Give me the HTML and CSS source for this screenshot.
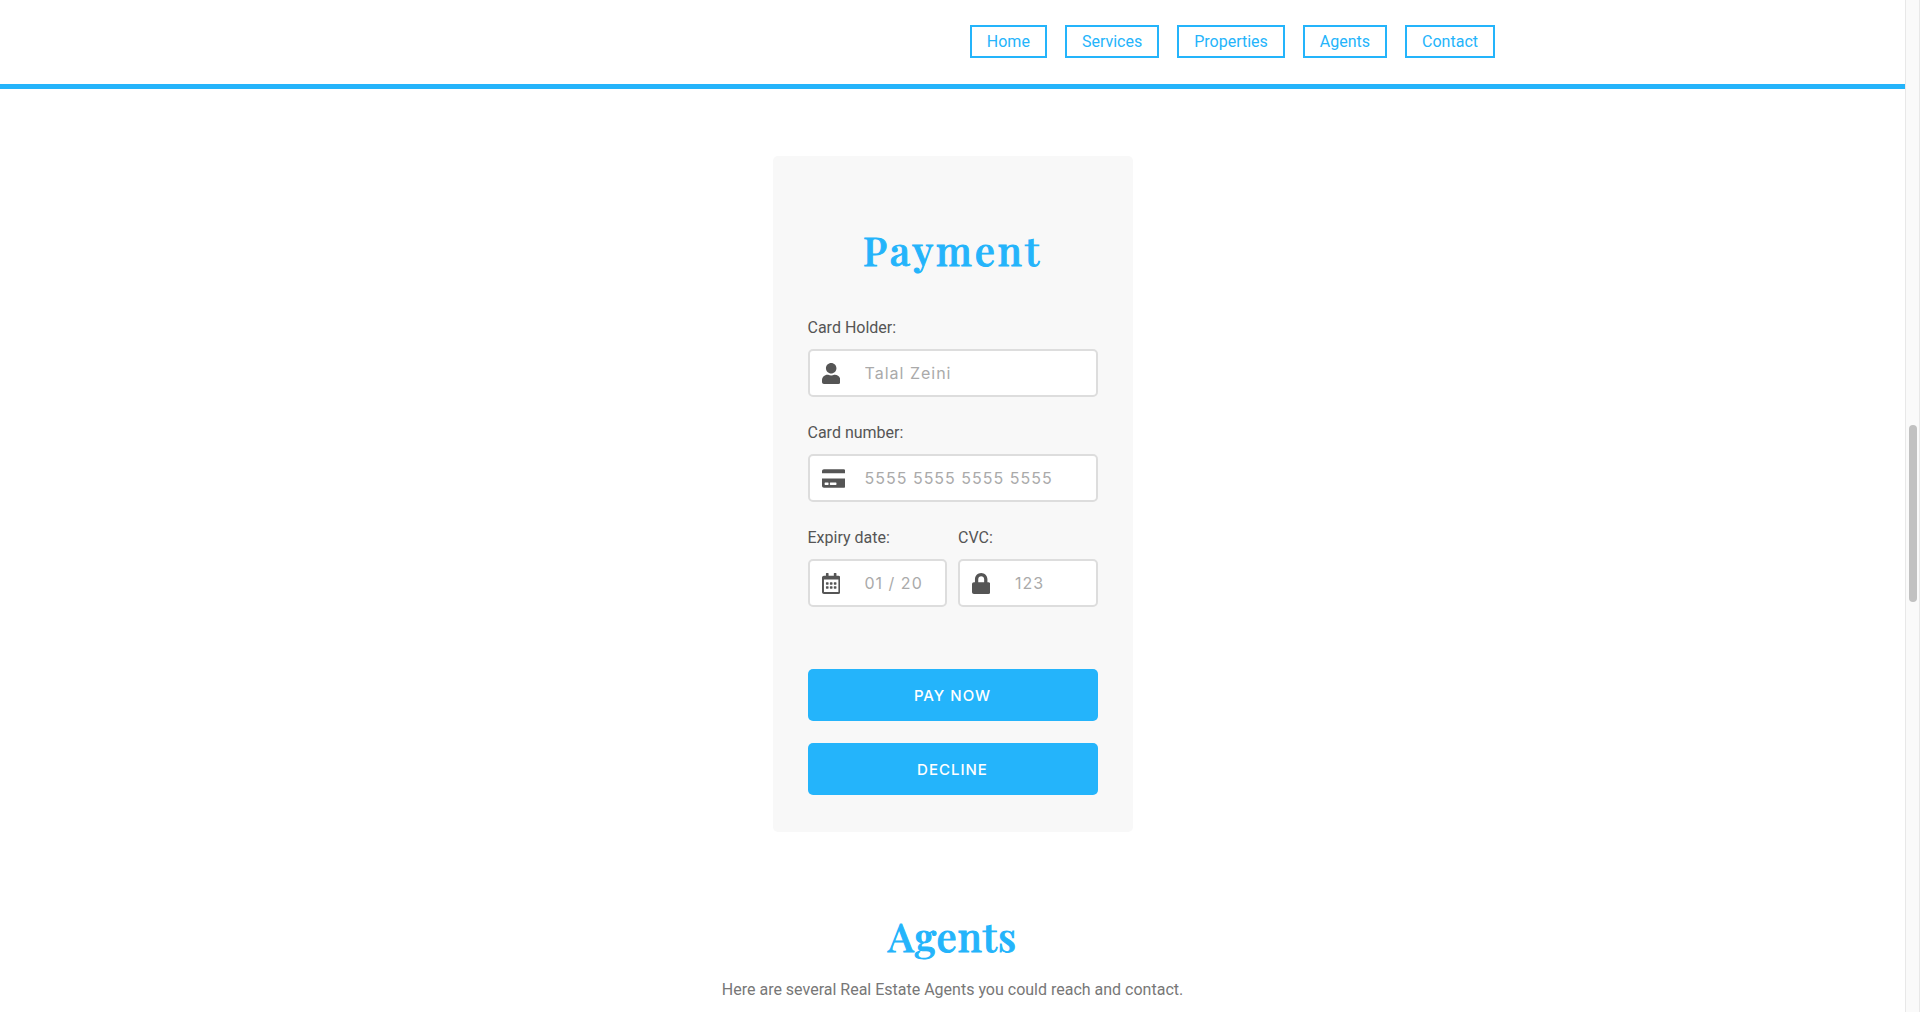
FILE: index.html
```html
<!DOCTYPE html>
<html lang="en">
<head>
<meta charset="utf-8">
<meta name="viewport" content="width=device-width, initial-scale=1">
<title>Real Estate - Payment</title>
<link rel="stylesheet" href="styles.css">
</head>
<body>
<div class="page">
  <header class="header">
    <nav class="nav">
      <a class="nav-link" href="#home">Home</a>
      <a class="nav-link" href="#services">Services</a>
      <a class="nav-link" href="#properties">Properties</a>
      <a class="nav-link" href="#agents">Agents</a>
      <a class="nav-link" href="#contact">Contact</a>
    </nav>
  </header>
  <main class="main">
    <form class="card">
      <h2 class="title title-spaced">Payment</h2>
      <div class="fields">
        <div class="field field-wide">
          <label class="label" for="holder">Card Holder:</label>
          <div class="control">
            <input class="input" id="holder" type="text" placeholder="Talal Zeini">
            <svg class="icon" viewBox="0 0 448 512" aria-hidden="true"><path d="M224 256c70.7 0 128-57.3 128-128S294.7 0 224 0 96 57.3 96 128s57.3 128 128 128zm89.600 32h-16.700c-22.200 10.200-46.900 16-72.900 16s-50.600-5.800-72.900-16h-16.700C60.200 288 0 348.200 0 422.400V464c0 26.500 21.500 48 48 48h352c26.500 0 48-21.500 48-48v-41.600c0-74.200-60.200-134.400-134.400-134.400z"/></svg>
          </div>
        </div>
        <div class="field field-wide">
          <label class="label" for="number">Card number:</label>
          <div class="control">
            <input class="input" id="number" type="text" placeholder="5555 5555 5555 5555">
            <svg class="icon" viewBox="0 0 576 512" aria-hidden="true"><path d="M0 432c0 26.500 21.500 48 48 48h480c26.500 0 48-21.500 48-48V256H0v176zm192-68c0-6.600 5.400-12 12-12h136c6.600 0 12 5.400 12 12v40c0 6.600-5.400 12-12 12H204c-6.600 0-12-5.400-12-12v-40zm-128 0c0-6.600 5.400-12 12-12h72c6.600 0 12 5.400 12 12v40c0 6.600-5.400 12-12 12H76c-6.600 0-12-5.400-12-12v-40zM576 80v48H0V80c0-26.500 21.500-48 48-48h480c26.500 0 48 21.500 48 48z"/></svg>
          </div>
        </div>
        <div class="field">
          <label class="label" for="expiry">Expiry date:</label>
          <div class="control">
            <input class="input" id="expiry" type="text" placeholder="01 / 20">
            <svg class="icon" viewBox="0 0 448 512" aria-hidden="true"><path d="M148 288h-40c-6.600 0-12-5.400-12-12v-40c0-6.600 5.400-12 12-12h40c6.600 0 12 5.400 12 12v40c0 6.600-5.400 12-12 12zm108-12v-40c0-6.600-5.400-12-12-12h-40c-6.600 0-12 5.400-12 12v40c0 6.600 5.400 12 12 12h40c6.600 0 12-5.400 12-12zm96 0v-40c0-6.600-5.400-12-12-12h-40c-6.600 0-12 5.400-12 12v40c0 6.600 5.400 12 12 12h40c6.600 0 12-5.400 12-12zm-96 96v-40c0-6.600-5.400-12-12-12h-40c-6.600 0-12 5.400-12 12v40c0 6.600 5.400 12 12 12h40c6.600 0 12-5.400 12-12zm-96 0v-40c0-6.600-5.400-12-12-12h-40c-6.600 0-12 5.400-12 12v40c0 6.600 5.400 12 12 12h40c6.600 0 12-5.400 12-12zm192 0v-40c0-6.600-5.400-12-12-12h-40c-6.600 0-12 5.400-12 12v40c0 6.600 5.400 12 12 12h40c6.600 0 12-5.400 12-12zm96-260v352c0 26.500-21.500 48-48 48H48c-26.500 0-48-21.500-48-48V112c0-26.500 21.500-48 48-48h48V12c0-6.600 5.400-12 12-12h40c6.600 0 12 5.400 12 12v52h128V12c0-6.600 5.400-12 12-12h40c6.600 0 12 5.400 12 12v52h48c26.500 0 48 21.500 48 48zm-48 346V160H48v298c0 3.300 2.700 6 6 6h340c3.300 0 6-2.700 6-6z"/></svg>
          </div>
        </div>
        <div class="field">
          <label class="label" for="cvc">CVC:</label>
          <div class="control">
            <input class="input" id="cvc" type="text" placeholder="123">
            <svg class="icon" viewBox="0 0 448 512" aria-hidden="true"><path d="M400 224h-24v-72C376 68.200 307.800 0 224 0S72 68.200 72 152v72H48c-26.500 0-48 21.500-48 48v192c0 26.500 21.500 48 48 48h352c26.500 0 48-21.500 48-48V272c0-26.500-21.500-48-48-48zm-104 0H152v-72c0-39.700 32.300-72 72-72s72 32.300 72 72v72z"/></svg>
          </div>
        </div>
      </div>
      <div class="actions">
        <button class="button" type="submit">PAY NOW</button>
        <button class="button" type="button">DECLINE</button>
      </div>
    </form>
    <section class="agents" id="agents">
      <h2 class="title">Agents</h2>
      <p class="intro">Here are several Real Estate Agents you could reach and contact.</p>
    </section>
  </main>
</div>
<div class="scrollbar" aria-hidden="true"><div class="thumb"></div></div>
</body>
</html>
```
FILE: styles.css
```css
* {
  box-sizing: border-box;
}

body {
  display: flex;
  min-height: 100vh;
  margin: 0;
  background: #fff;
  color: #555;
  font: 16px/24px Roboto, sans-serif;
}

.page {
  flex: 1;
}

.header {
  padding: 25px 20px 26px;
  border-bottom: 5px solid #24b4fb;
}

.nav {
  display: flex;
  justify-content: flex-end;
  gap: 18px;
  max-width: 1085px;
  margin: 0 auto;
}

.nav-link {
  padding: 5px 15px;
  border: 2px solid #24b4fb;
  color: #24b4fb;
  line-height: 19px;
  text-decoration: none;
}

.main {
  display: flex;
  flex-direction: column;
  align-items: center;
  padding-top: 67px;
}

.card {
  width: 100%;
  max-width: 360px;
  padding: 68px 35px 37px;
  border-radius: 5px;
  background: #f8f8f8;
}

.title {
  margin: 0;
  color: #24b4fb;
  font: 500 40px/52px "Playfair Display", "Liberation Serif", serif;
  letter-spacing: 1px;
  text-align: center;
  -webkit-text-stroke: 1px #24b4fb;
}

.title-spaced {
  letter-spacing: 3px;
}

.fields {
  display: grid;
  grid-template-columns: 1fr 1fr;
  gap: 24px 11px;
  margin-top: 40px;
}

.field-wide {
  grid-column: 1 / -1;
}

.label {
  display: block;
  margin-bottom: 9px;
}

.control {
  position: relative;
}

.input {
  display: block;
  width: 100%;
  height: 48px;
  padding: 0 10px 0 55px;
  border: 2px solid #ddd;
  border-radius: 5px;
  background: #fff;
  color: #555;
  font: 16px Inter, sans-serif;
  letter-spacing: 1px;
}

.input::placeholder {
  color: #aaa;
}

.icon {
  position: absolute;
  top: 14px;
  left: 14px;
  height: 21px;
  fill: #555;
}

.actions {
  display: grid;
  gap: 22px;
  margin-top: 62px;
}

.button {
  height: 52px;
  border: 0;
  border-radius: 5px;
  background: #24b4fb;
  color: #fff;
  font: 500 15px Inter, sans-serif;
  letter-spacing: 1px;
}

.agents {
  padding: 78px 20px 0;
  text-align: center;
}

.intro {
  margin: 16px 0 0;
  color: #777;
}

.scrollbar {
  width: 15px;
  padding: 42vh 2px 0 3px;
  border-right: 1px solid #e8e8e8;
  border-left: 1px solid #e8e8e8;
  background: #fafafa;
}

.thumb {
  height: 17.5vh;
  border-radius: 4px;
  background: #c1c1c1;
}
```
